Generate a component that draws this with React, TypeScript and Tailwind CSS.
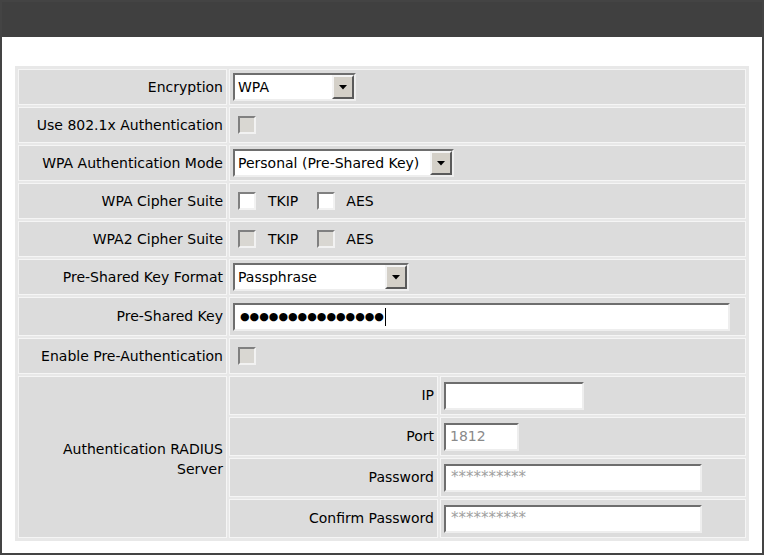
import React from "react";

const sunken =
  "border-2 border-t-[#6e6e6e] border-l-[#6e6e6e] border-b-[#eeeeee] border-r-[#eeeeee]";

function Cell({
  className = "",
  children,
}: {
  className?: string;
  children?: React.ReactNode;
}) {
  return (
    <div className={`border border-[#f5f5f5] bg-[#dcdcdc] flex items-center ${className}`}>
      {children}
    </div>
  );
}

function Select({ value, width }: { value: string; width: string }) {
  return (
    <div className={`${sunken} bg-white h-[28px] flex items-center ${width}`}>
      <span className="flex-1 pl-[3px] leading-none">{value}</span>
      <div className="w-[22px] h-[24px] bg-[#d4d0c8] border-2 border-t-[#f4f4f4] border-l-[#f4f4f4] border-b-[#5a5a5a] border-r-[#5a5a5a] flex items-center justify-center">
        <svg width="8" height="5" viewBox="0 0 8 5">
          <path d="M0 0 L8 0 L4 4.5 Z" fill="#000" />
        </svg>
      </div>
    </div>
  );
}

function Check({ disabled }: { disabled?: boolean }) {
  return (
    <div
      className={`w-[18px] h-[18px] border-2 border-t-[#808080] border-l-[#808080] border-b-[#f2f2f2] border-r-[#f2f2f2] ${
        disabled ? "bg-[#d9d7d2]" : "bg-white"
      }`}
    />
  );
}

function Row({
  label,
  h,
  children,
}: {
  label: string;
  h: string;
  children?: React.ReactNode;
}) {
  return (
    <div className={`flex gap-[2px] ${h}`}>
      <Cell className="w-[209px] justify-end pr-[3px]">{label}</Cell>
      <Cell className="w-[517px] pl-[3px]">{children}</Cell>
    </div>
  );
}

function SubRow({ label, children }: { label: string; children?: React.ReactNode }) {
  return (
    <div className="flex gap-[2px] h-[39px]">
      <Cell className="w-[209px] justify-end pr-[3px]">{label}</Cell>
      <Cell className="w-[306px] pl-[3px]">{children}</Cell>
    </div>
  );
}

export default function App() {
  return (
    <div className="w-[764px] h-[557px] bg-white text-[14px] text-black font-['DejaVu_Sans',sans-serif]">
      <div className="h-[555px] border-2 border-[#444444] flex flex-col">
        <div className="h-[35px] bg-[#404040]" />
        <div className="pl-[13px] pt-[29px]">
          <div className="w-[734px] bg-[#e8e8e8] p-[3px] flex flex-col gap-[2px]">
            <Row label="Encryption" h="h-[36px]">
              <Select value="WPA" width="w-[123px]" />
            </Row>
            <Row label="Use 802.1x Authentication" h="h-[36px]">
              <div className="pl-[5px]">
                <Check disabled />
              </div>
            </Row>
            <Row label="WPA Authentication Mode" h="h-[36px]">
              <Select value="Personal (Pre-Shared Key)" width="w-[221px]" />
            </Row>
            <Row label="WPA Cipher Suite" h="h-[36px]">
              <div className="pl-[5px] flex items-center">
                <Check />
                <span className="ml-[12px]">TKIP</span>
                <div className="ml-[19px]">
                  <Check />
                </div>
                <span className="ml-[11px]">AES</span>
              </div>
            </Row>
            <Row label="WPA2 Cipher Suite" h="h-[36px]">
              <div className="pl-[5px] flex items-center">
                <Check disabled />
                <span className="ml-[12px]">TKIP</span>
                <div className="ml-[19px]">
                  <Check disabled />
                </div>
                <span className="ml-[11px]">AES</span>
              </div>
            </Row>
            <Row label="Pre-Shared Key Format" h="h-[36px]">
              <Select value="Passphrase" width="w-[176px]" />
            </Row>
            <Row label="Pre-Shared Key" h="h-[39px]">
              <div className={`${sunken} bg-white h-[28px] w-[497px] flex items-center pl-[5px]`}>
                <span className="text-[11px] leading-none">
                  ●●●●●●●●●●●●●●●
                </span>
                <span className="w-px h-[18px] bg-black ml-[1px]" />
              </div>
            </Row>
            <Row label="Enable Pre-Authentication" h="h-[36px]">
              <div className="pl-[5px]">
                <Check disabled />
              </div>
            </Row>
            <div className="flex gap-[2px] h-[162px]">
              <Cell className="w-[209px] justify-end pr-[3px] text-right leading-[20px] pt-[4px]">
                <span>
                  Authentication RADIUS
                  <br />
                  Server
                </span>
              </Cell>
              <div className="w-[517px] flex flex-col gap-[2px]">
                <SubRow label="IP">
                  <div className={`${sunken} bg-white h-[28px] w-[140px]`} />
                </SubRow>
                <SubRow label="Port">
                  <div className={`${sunken} bg-white h-[28px] w-[75px] flex items-center pl-[4px] text-[#8a8a8a]`}>
                    1812
                  </div>
                </SubRow>
                <SubRow label="Password">
                  <div className={`${sunken} bg-white h-[28px] w-[258px] flex items-center pl-[5px] text-[#a0a0a0] text-[15px]`}>
                    **********
                  </div>
                </SubRow>
                <SubRow label="Confirm Password">
                  <div className={`${sunken} bg-white h-[28px] w-[258px] flex items-center pl-[5px] text-[#a0a0a0] text-[15px]`}>
                    **********
                  </div>
                </SubRow>
              </div>
            </div>
          </div>
        </div>
      </div>
    </div>
  );
}
